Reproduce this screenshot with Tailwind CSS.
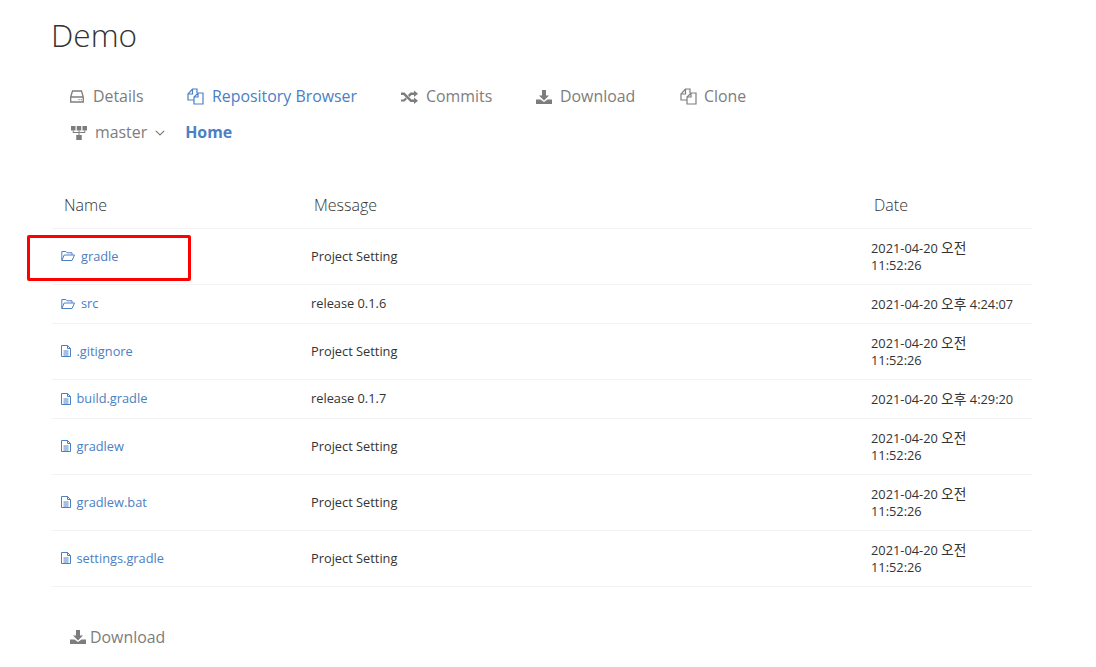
<!DOCTYPE html>
<html lang="en">
<head>
    <meta charset="UTF-8">
    <title>Demo</title>
    <script src="https://cdn.jsdelivr.net/npm/@tailwindcss/browser@4"></script>
</head>
<body class="relative h-[667px] overflow-hidden bg-white font-['Open_Sans','Noto_Sans_CJK_KR',sans-serif] text-[#333]">
    <main class="pl-[52px] w-[1032px]">
        <h1 class="pt-[13px] h-[88px] -ml-px text-[31.6px] leading-[44px] font-light text-[#333]">Demo</h1>

        <!-- Tabs -->
        <nav class="flex items-center h-[24px] mt-[-3px] pl-[18px] text-[15.9px] text-[#7d7d7d]">
            <a class="flex items-center gap-[9px] w-[117px]">
                <svg class="w-[14px] h-[13px]" viewBox="0 0 14 13" fill="none" stroke="currentColor" stroke-width="1.3"><path d="M.7 7 2.500 1h9l1.800 6v5H.7zM.7 7h12.600"/><path d="M8.500 9.600h1M10.800 9.600h1"/></svg>
                Details
            </a>
            <a class="flex items-center gap-[8px] w-[214px] text-[#4a80c4]">
                <svg class="w-[17px] h-[17px]" viewBox="0 0 17 17" fill="none" stroke="currentColor" stroke-width="1.2"><path d="M7 12H1V6l4.500-5H10v4"/><path d="M1 6h4.500V1M11 5h5v11H7V9zM7 9h4V5"/></svg>
                Repository Browser
            </a>
            <a class="flex items-center gap-[8px] w-[135px]">
                <svg class="w-[17px] h-[14px]" viewBox="0 0 17 14" fill="currentColor"><path d="M0 2.500h3.500l7 7H13V7.500l4 3.200-4 3.200v-2H9.500l-7-7H0z"/><path d="M0 9.500h2.500l2-2 1.500 1.500-2.500 2.500H0zM9.500 2.500H13V.5l4 3.200-4 3.200v-2h-2.500l-2 2L7 5z"/></svg>
                Commits
            </a>
            <a class="flex items-center gap-[8px] w-[144px]">
                <svg class="w-[16px] h-[16px]" viewBox="0 0 16 16" fill="currentColor"><path d="M6 1h4v5.500h3L8 11.500 3 6.500h3z"/><path d="M0 10.500h4.500L8 13l3.500-2.500H16V15H0z"/></svg>
                Download
            </a>
            <a class="flex items-center gap-[7px]">
                <svg class="w-[17px] h-[17px]" viewBox="0 0 17 17" fill="none" stroke="currentColor" stroke-width="1.2"><path d="M7 12H1V6l4.500-5H10v4"/><path d="M1 6h4.500V1M11 5h5v11H7V9zM7 9h4V5"/></svg>
                Clone
            </a>
        </nav>

        <!-- Branch + breadcrumb -->
        <div class="flex items-center h-[24px] mt-[12px] pl-[19px] text-[15.9px] text-[#7d7d7d]">
            <svg class="w-[16px] h-[14px] mr-[8px]" viewBox="0 0 16 14" fill="currentColor"><path d="M0 0h4.500v4.500H0zM5.750 0h4.500v4.500h-4.500zM11.500 0H16v4.500h-4.500zM5.250 9h5.500v5h-5.500z"/><path d="M1.750 4.500h1v1.500h4.750V4.500h1V6h4.750V4.500h1V7H8.500v2h-1V7H1.750z"/></svg>
            <span>master</span>
            <svg class="w-[10px] h-[6px] ml-[8px]" viewBox="0 0 10 6" fill="none" stroke="currentColor" stroke-width="1.2"><path d="M.8.800 5 5 9.200.8"/></svg>
            <a class="ml-[20px] font-bold text-[#4a80c4]">Home</a>
        </div>

        <!-- File list -->
        <table class="mt-[34px] w-[980px] table-fixed border-collapse text-[12.8px] leading-[17px]">
            <thead>
                <tr class="border-b border-[#f2f2f2] h-[49px] text-base text-[#333]">
                    <th class="w-[250px] pl-[12px] pt-[3px] text-left font-light">Name</th>
                    <th class="w-[560px] pl-[12px] pt-[3px] text-left font-light">Message</th>
                    <th class="pl-[12px] pt-[3px] text-left font-light">Date</th>
                </tr>
            </thead>
            <tbody>
                <tr class="border-b border-[#f2f2f2]">
                    <td class="pl-[9px]"><a class="flex items-center gap-[6px] text-[#4a80c4]"><svg class="w-[14px] h-[12px]" viewBox="0 0 14 12" fill="none" stroke="currentColor" stroke-width="1"><path d="M.8 10.500V1.500h4l1.200 1.300h5v2M.8 10.500l2.400-5.500h10.300l-2.500 5.500z"/></svg>gradle</a></td>
                    <td class="pl-[9px]">Project Setting</td>
                    <td class="pl-[9px] pr-[13px] pt-[11px] pb-[10px]">2021-04-20 <span class="text-[13.8px] leading-none">오전</span> 11:52:26</td>
                </tr>
                <tr class="border-b border-[#f2f2f2]">
                    <td class="pl-[9px]"><a class="flex items-center gap-[6px] text-[#4a80c4]"><svg class="w-[14px] h-[12px]" viewBox="0 0 14 12" fill="none" stroke="currentColor" stroke-width="1"><path d="M.8 10.500V1.500h4l1.200 1.300h5v2M.8 10.500l2.400-5.500h10.300l-2.500 5.500z"/></svg>src</a></td>
                    <td class="pl-[9px]">release 0.1.6</td>
                    <td class="pl-[9px] pr-[13px] pt-[11px] pb-[10px]">2021-04-20 <span class="text-[13.8px] leading-none">오후</span> 4:24:07</td>
                </tr>
                <tr class="border-b border-[#f2f2f2]">
                    <td class="pl-[9px]"><a class="flex items-center gap-[5.5px] text-[#4a80c4]"><svg class="w-[10px] h-[12px]" viewBox="0 0 10 12" fill="none" stroke="currentColor" stroke-width="1"><path d="M.5.500h6l3 3v8h-9zM6.500.500v3h3M2.500 6h5M2.500 8h5M2.500 10h5"/></svg>.gitignore</a></td>
                    <td class="pl-[9px]">Project Setting</td>
                    <td class="pl-[9px] pr-[13px] pt-[11px] pb-[10px]">2021-04-20 <span class="text-[13.8px] leading-none">오전</span> 11:52:26</td>
                </tr>
                <tr class="border-b border-[#f2f2f2]">
                    <td class="pl-[9px]"><a class="flex items-center gap-[5.5px] text-[#4a80c4]"><svg class="w-[10px] h-[12px]" viewBox="0 0 10 12" fill="none" stroke="currentColor" stroke-width="1"><path d="M.5.500h6l3 3v8h-9zM6.500.500v3h3M2.500 6h5M2.500 8h5M2.500 10h5"/></svg>build.gradle</a></td>
                    <td class="pl-[9px]">release 0.1.7</td>
                    <td class="pl-[9px] pr-[13px] pt-[11px] pb-[10px]">2021-04-20 <span class="text-[13.8px] leading-none">오후</span> 4:29:20</td>
                </tr>
                <tr class="border-b border-[#f2f2f2]">
                    <td class="pl-[9px]"><a class="flex items-center gap-[5.5px] text-[#4a80c4]"><svg class="w-[10px] h-[12px]" viewBox="0 0 10 12" fill="none" stroke="currentColor" stroke-width="1"><path d="M.5.500h6l3 3v8h-9zM6.500.500v3h3M2.500 6h5M2.500 8h5M2.500 10h5"/></svg>gradlew</a></td>
                    <td class="pl-[9px]">Project Setting</td>
                    <td class="pl-[9px] pr-[13px] pt-[11px] pb-[10px]">2021-04-20 <span class="text-[13.8px] leading-none">오전</span> 11:52:26</td>
                </tr>
                <tr class="border-b border-[#f2f2f2]">
                    <td class="pl-[9px]"><a class="flex items-center gap-[5.5px] text-[#4a80c4]"><svg class="w-[10px] h-[12px]" viewBox="0 0 10 12" fill="none" stroke="currentColor" stroke-width="1"><path d="M.5.500h6l3 3v8h-9zM6.500.500v3h3M2.500 6h5M2.500 8h5M2.500 10h5"/></svg>gradlew.bat</a></td>
                    <td class="pl-[9px]">Project Setting</td>
                    <td class="pl-[9px] pr-[13px] pt-[11px] pb-[10px]">2021-04-20 <span class="text-[13.8px] leading-none">오전</span> 11:52:26</td>
                </tr>
                <tr class="border-b border-[#f2f2f2]">
                    <td class="pl-[9px]"><a class="flex items-center gap-[5.5px] text-[#4a80c4]"><svg class="w-[10px] h-[12px]" viewBox="0 0 10 12" fill="none" stroke="currentColor" stroke-width="1"><path d="M.5.500h6l3 3v8h-9zM6.500.500v3h3M2.500 6h5M2.500 8h5M2.500 10h5"/></svg>settings.gradle</a></td>
                    <td class="pl-[9px]">Project Setting</td>
                    <td class="pl-[9px] pr-[13px] pt-[11px] pb-[10px]">2021-04-20 <span class="text-[13.8px] leading-none">오전</span> 11:52:26</td>
                </tr>
            </tbody>
        </table>

        <a class="flex items-center gap-[4px] mt-[39px] ml-[18px] text-[15.9px] text-[#7d7d7d]">
            <svg class="w-[16px] h-[16px]" viewBox="0 0 16 16" fill="currentColor"><path d="M6 1h4v5.500h3L8 11.500 3 6.500h3z"/><path d="M0 10.500h4.500L8 13l3.500-2.500H16V15H0z"/></svg>
            Download
        </a>
    </main>

    <!-- Red annotation box -->
    <div class="absolute left-[27px] top-[235px] w-[164px] h-[46px] border-[3px] border-[#f00] rounded-[2px]"></div>
</body>
</html>
